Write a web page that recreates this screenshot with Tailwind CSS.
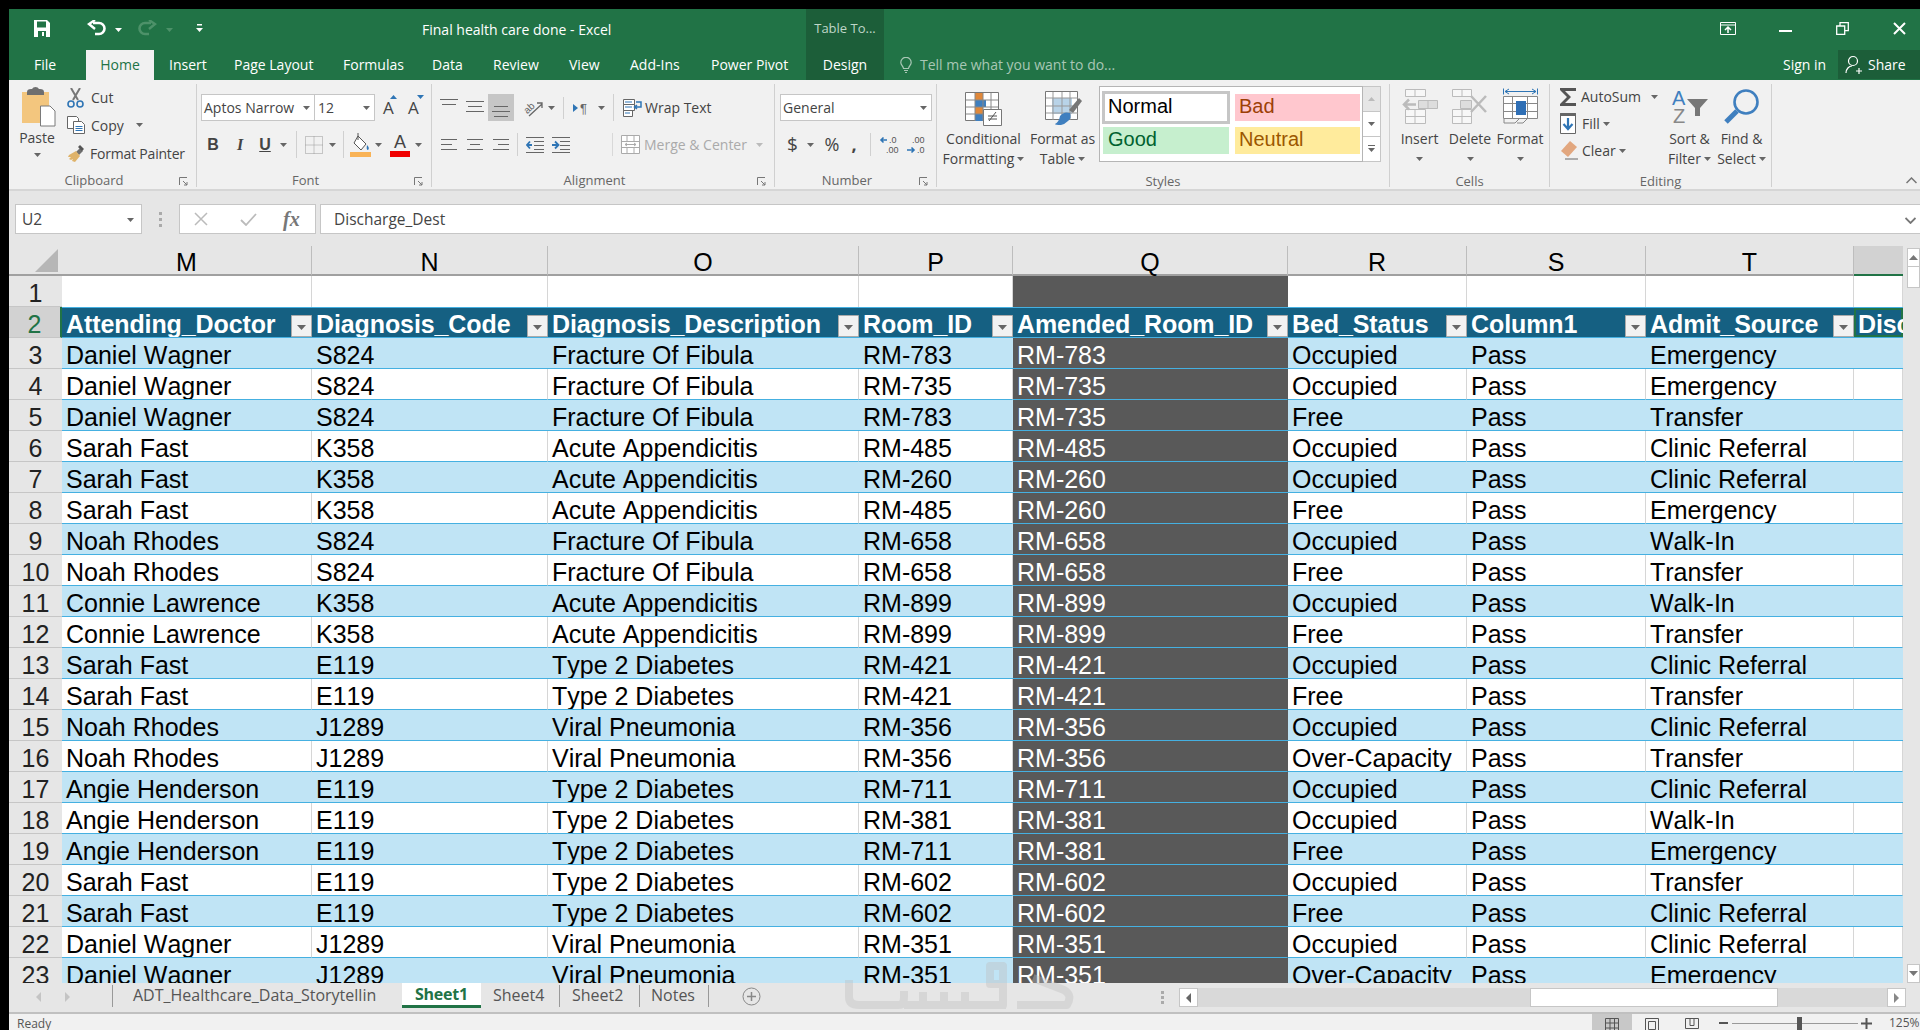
<!DOCTYPE html>
<html><head><meta charset="utf-8"><title>Final health care done - Excel</title>
<script src="https://cdn.jsdelivr.net/npm/@tailwindcss/browser@4"></script></head>
<body class="bg-black w-[1920px] h-[1030px] overflow-hidden font-['Open_Sans',sans-serif]">
<div class="pt-[9px] pl-[9px] w-[1920px] h-[1030px] relative overflow-hidden">

<!-- title row -->
<div class="bg-[#217346] h-[41px] flex text-white text-[14px]">
  <div class="w-[413px] flex items-center">
    <svg class="ml-[25px] mb-[2px]" width="16" height="17" viewBox="0 0 16 17"><path d="M0 0h13l3 3v14H0z" fill="#fff"/><path d="M3 1.500h9v6H3z" fill="#217346"/><path d="M4 11h8v6H4z" fill="#217346"/><path d="M8 12h2v4H8z" fill="#fff"/></svg>
    <svg class="ml-[37px] mb-[2px]" width="19" height="17" viewBox="0 0 19 17" fill="none"><path d="M6 3h6a5 5 0 0 1 0 11H8" stroke="#fff" stroke-width="2.600"/><path d="M8 0 2 4l6 5" stroke="#fff" stroke-width="2.400"/></svg>
    <svg class="ml-[9px]" width="7" height="4"><path d="M0 0h7L3.500 4z" fill="#fff"/></svg>
    <svg class="ml-[16px] mb-[2px]" width="19" height="17" viewBox="0 0 19 17" fill="none"><path d="M13 3H7a5 5 0 0 0 0 11h4" stroke="#4d9169" stroke-width="2.600"/><path d="m11 0 6 4-6 5" stroke="#4d9169" stroke-width="2.400"/></svg>
    <svg class="ml-[9px]" width="7" height="4"><path d="M0 0h7L3.500 4z" fill="#4d9169"/></svg>
    <svg class="ml-[23px] mb-[2px]" width="7" height="9"><path d="M1 0h5v1.500H1zM0 4h7L3.500 8z" fill="#fff"/></svg>
  </div>
  <div class="w-[384px] flex items-center pb-[1px]">Final health care done - Excel</div>
  <div class="w-[78px] bg-[#1c5e39] flex items-center justify-center text-[13px] text-[#bfd6c8] pb-[1px]">Table To...</div>
  <div class="flex-1 flex items-center justify-end pb-[3px]">
    <svg class="mr-[43px]" width="16" height="13" viewBox="0 0 16 13" fill="none" stroke="#fff"><path d="M.5.500h15v12H.5zM.5 3h15"/><path d="M8 11V5M5 8l3-3 3 3" stroke-width="1.500"/></svg>
    <svg class="mr-[44px] mt-[5px]" width="13" height="2"><path d="M0 0h13v2H0z" fill="#fff"/></svg>
    <svg class="mr-[44px]" width="13" height="13" viewBox="0 0 13 13" fill="none" stroke="#fff" stroke-width="1.300"><path d="M.7 4h8v8.300H.7zM4 4V.7h8.300v8H9"/></svg>
    <svg class="mr-[14px]" width="13" height="13" viewBox="0 0 13 13" fill="none" stroke="#fff" stroke-width="2"><path d="m1 1 11 11M12 1 1 12"/></svg>
  </div>
</div>

<!-- tab row -->
<div class="bg-[#217346] h-[30px] flex text-white text-[14px] leading-[29px]">
  <div class="w-[77px] pl-[25px]">File</div>
  <div class="w-[68px] bg-[#f1f1f1] text-[#217346] text-center">Home</div>
  <div class="w-[80px] pl-[15px]">Insert</div>
  <div class="w-[109px]">Page Layout</div>
  <div class="w-[89px]">Formulas</div>
  <div class="w-[61px]">Data</div>
  <div class="w-[76px]">Review</div>
  <div class="w-[61px]">View</div>
  <div class="w-[81px]">Add-Ins</div>
  <div class="w-[95px]">Power Pivot</div>
  <div class="w-[78px] bg-[#1c5e39] text-center">Design</div>
  <svg class="ml-[16px] mt-[7px]" width="12" height="17" viewBox="0 0 12 17" fill="none" stroke="#a8c7b5" stroke-width="1.200"><path d="M3.500 11.500C3 9 .8 8 .8 5.500a5.200 5.200 0 0 1 10.400 0C11.200 8 9 9 8.500 11.500zM4 13.500h4M5 15.500h2"/></svg>
  <div class="ml-[8px] text-[#a8c7b5] w-[863px]">Tell me what you want to do...</div>
  <div class="w-[55px]">Sign in</div>
  <div class="w-[82px] h-[29px] bg-[#1c5e39] flex items-center">
    <svg class="ml-[7px]" width="18" height="20" viewBox="0 0 18 20" fill="none" stroke="#fff" stroke-width="1.200"><circle cx="8" cy="6" r="4.500"/><path d="M1 18c0-4 3-7 6-7M11 16h6M14 13v6"/></svg>
    <span class="ml-[5px]">Share</span>
  </div>
</div>

<!-- ribbon -->
<div class="bg-[#f1f1f1] h-[111px] flex border-b-2 border-[#d6d6d6] text-[14px] text-[#444]">

  <!-- Clipboard -->
  <div class="w-[188px] h-[103px] mt-[4px] border-r border-[#d0d0d0] flex flex-col">
    <div class="h-[91px] flex">
      <div class="w-[58px] flex flex-col items-center">
        <svg class="mt-[3px] -ml-[1px]" width="36" height="40" viewBox="0 0 36 40"><path d="M2 5h27v31H2z" fill="#f3c67e"/><path d="M7 5q0-3 4-3h1q1-2 3.500-2T19 2h1q4 0 4 3v3H7z" fill="#6f6f6f"/><path d="M20.500 19H30l5 5v15H20.500z" fill="#fff" stroke="#7a7a7a"/></svg>
        <div class="-ml-[2px] mt-[2px] leading-[18px]">Paste</div>
        <svg class="-ml-[2px] mt-[6px]" width="7" height="4"><path d="M0 0h7L3.500 4z" fill="#666"/></svg>
      </div>
      <div class="flex flex-col">
        <div class="h-[27px] flex items-center"><svg width="18" height="20" viewBox="0 0 18 20" fill="none"><path d="m4 0 7 12M13 0 6 12" stroke="#777" stroke-width="2"/><circle cx="4" cy="16" r="3" stroke="#2f75b5" stroke-width="1.600"/><circle cx="13" cy="16" r="3" stroke="#2f75b5" stroke-width="1.600"/></svg><span class="ml-[6px]">Cut</span></div>
        <div class="h-[28px] flex items-center"><svg width="18" height="18" viewBox="0 0 18 18" fill="#fff" stroke="#666"><path d="M.5.500h9l2 2v10H.5z"/><path d="M6.500 5.500h8l3 3v9h-11z"/><path d="M8.500 10.500h7M8.500 12.500h7M8.500 14.500h7" stroke="#2f75b5"/></svg><span class="ml-[6px]">Copy</span><svg class="ml-[12px]" width="7" height="4"><path d="M0 0h7L3.500 4z" fill="#666"/></svg></div>
        <div class="h-[28px] flex items-center pt-[1px]"><svg width="18" height="17" viewBox="0 0 18 17"><path d="M9 7l4-4 3 3-4 4z" fill="#6f6f6f"/><path d="M13 0l4 4-2 2-4-4z" fill="#555"/><path d="M9 6l4 5-5 6-3-1 1-2-2 1-2-1 2-2-3 0 1-2z" fill="#dfb36a"/></svg><span class="ml-[5px] tracking-[-0.2px]">Format Painter</span></div>
      </div>
    </div>
    <div class="flex items-center h-[12px] text-[13px] text-[#666]"><span class="flex-1 text-center">Clipboard</span><svg class="mr-[8px]" width="9" height="9" viewBox="0 0 9 9" fill="none" stroke="#777"><path d="M.5 8V.5H8M4 4l4 4M8 5v3H5"/></svg></div>
  </div>

  <!-- Font -->
  <div class="w-[235px] h-[103px] mt-[4px] border-r border-[#d0d0d0] flex flex-col">
    <div class="h-[91px] pl-[4px] flex flex-col">
      <div class="flex items-center mt-[10px] h-[27px]">
        <div class="w-[114px] h-[27px] bg-white border border-[#c6c6c6] flex items-center pl-[2px] justify-between pr-[4px]">Aptos Narrow<svg width="7" height="4"><path d="M0 0h7L3.500 4z" fill="#666"/></svg></div>
        <div class="w-[60px] h-[27px] bg-white border border-[#c6c6c6] border-l-0 flex items-center pl-[3px] justify-between pr-[4px]">12<svg width="7" height="4"><path d="M0 0h7L3.500 4z" fill="#666"/></svg></div>
        <div class="relative ml-[8px] text-[17px] leading-[20px] w-[25px]">A<svg class="absolute left-[7px] top-[-3px]" width="7" height="4"><path d="M3.500 0 7 4H0z" fill="#2f75b5"/></svg></div>
        <div class="relative text-[17px] leading-[20px] w-[14px]">A<svg class="absolute left-[9px] top-[-3px]" width="7" height="4"><path d="M0 0h7L3.500 4z" fill="#2f75b5"/></svg></div>
      </div>
      <div class="flex items-center mt-[10px] h-[27px] font-['Liberation_Sans'] text-[16px]">
        <span class="w-[16px] ml-[4px] font-bold text-center">B</span>
        <span class="w-[16px] ml-[11px] italic font-bold font-['Liberation_Serif'] text-center">I</span>
        <span class="w-[14px] ml-[10px] font-bold underline text-center">U</span>
        <svg class="ml-[8px]" width="7" height="4"><path d="M0 0h7L3.500 4z" fill="#666"/></svg>
        <div class="w-px h-[27px] bg-[#d0d0d0] ml-[9px]"></div>
        <svg class="ml-[8px]" width="18" height="18" viewBox="0 0 18 18" fill="none" stroke="#999" stroke-dasharray="1 1"><path d="M.5.500h17v17H.5zM9 .5v17M.5 9h17"/></svg>
        <svg class="ml-[6px]" width="7" height="4"><path d="M0 0h7L3.500 4z" fill="#666"/></svg>
        <div class="w-px h-[27px] bg-[#d0d0d0] ml-[7px]"></div>
        <svg class="ml-[6px]" width="21" height="24" viewBox="0 0 21 24"><path d="m8 3 8 8-5 6-7-7z" fill="#fff" stroke="#555"/><path d="M8 0v7" stroke="#555"/><path d="M17 12q3 3 1 5-2 0-1-5z" fill="#2f75b5"/><path d="M0 19h21v5H0z" fill="#f9b356"/></svg>
        <svg class="ml-[4px]" width="7" height="4"><path d="M0 0h7L3.500 4z" fill="#666"/></svg>
        <div class="ml-[8px] flex flex-col items-center w-[20px] mt-[2px]"><span class="leading-[17px] text-[#444] text-[18px]">A</span><div class="w-[20px] h-[6px] bg-[#f00000]"></div></div>
        <svg class="ml-[5px]" width="7" height="4"><path d="M0 0h7L3.500 4z" fill="#666"/></svg>
      </div>
    </div>
    <div class="flex items-center h-[12px] text-[13px] text-[#666]"><span class="flex-1 text-center">Font</span><svg class="mr-[8px]" width="9" height="9" viewBox="0 0 9 9" fill="none" stroke="#777"><path d="M.5 8V.5H8M4 4l4 4M8 5v3H5"/></svg></div>
  </div>

  <!-- Alignment -->
  <div class="w-[343px] h-[103px] mt-[4px] border-r border-[#d0d0d0] flex flex-col">
    <div class="h-[91px] flex flex-col">
      <div class="flex items-center mt-[10px] h-[27px]">
        <svg class="ml-[8px] mb-[11px]" width="18" height="7" stroke="#666"><path d="M0 .5h18M2 5.500h14"/></svg>
        <svg class="ml-[8px] mb-[2px]" width="18" height="11" stroke="#666"><path d="M0 .5h18M2 5.500h14M0 10.500h18"/></svg>
        <div class="ml-[4px] w-[26px] h-[27px] bg-[#c6c6c6] flex justify-center items-end pb-[4px]"><svg width="18" height="11" stroke="#666"><path d="M2 .5h14M0 5.500h18M2 10.500h14"/></svg></div>
        <svg class="ml-[11px] overflow-visible" width="20" height="18" viewBox="0 0 20 18" fill="none" stroke="#666"><text x="-1" y="11" font-size="10" fill="#666" stroke="none" transform="rotate(-42 6 9)" font-family="Liberation Sans">ab</text><path d="m4 17 13-12M12 4h5v5" stroke-width="1.300"/></svg>
        <svg class="ml-[3px]" width="7" height="4"><path d="M0 0h7L3.500 4z" fill="#666"/></svg>
        <div class="w-px h-[22px] bg-[#d0d0d0] ml-[8px]"></div>
        <svg class="ml-[9px] overflow-visible" width="18" height="14" viewBox="0 0 18 14"><path d="M0 3l5 4-5 4z" fill="#2f75b5"/><text x="7" y="12" font-size="13" fill="#666" font-family="Liberation Sans">¶</text></svg>
        <svg class="ml-[7px]" width="7" height="4"><path d="M0 0h7L3.500 4z" fill="#666"/></svg>
        <div class="w-px h-[27px] bg-[#d0d0d0] ml-[8px]"></div>
        <svg class="ml-[9px]" width="20" height="18" viewBox="0 0 20 18" fill="#fff" stroke="#666"><path d="M.5.500h11v5H.5zM.5 5.500h11v6H.5zM.5 11.500h9v6h-9z"/><path d="M13 3h5v5h-6M14 6 11.500 8l2.500 2" fill="none" stroke="#2f75b5" stroke-width="1.500"/><path d="M2 3h7M2 8h7M2 14h5" stroke="#2f75b5"/></svg>
        <span class="ml-[2px]">Wrap Text</span>
      </div>
      <div class="flex items-center mt-[10px] h-[27px]">
        <svg class="ml-[9px]" width="16" height="11" stroke="#666"><path d="M0 .5h16M0 5.500h11M0 10.500h16"/></svg>
        <svg class="ml-[10px]" width="16" height="11" stroke="#666"><path d="M0 .5h16M3 5.500h10M0 10.500h16"/></svg>
        <svg class="ml-[10px]" width="16" height="11" stroke="#666"><path d="M0 .5h16M5 5.500h11M0 10.500h16"/></svg>
        <div class="w-px h-[23px] bg-[#d0d0d0] ml-[8px]"></div>
        <svg class="ml-[8px]" width="18" height="16" viewBox="0 0 18 16" fill="none"><path d="M0 .5h18M8 4.500h10M8 8.500h10M8 12.500h10M0 15.500h18" stroke="#666"/><path d="M6 8H1M4 4.500 1 8l3 3.500" stroke="#2f75b5" stroke-width="1.800"/></svg>
        <svg class="ml-[8px]" width="18" height="16" viewBox="0 0 18 16" fill="none"><path d="M0 .5h18M8 4.500h10M8 8.500h10M8 12.500h10M0 15.500h18" stroke="#666"/><path d="M0 8h6M3 4.500 6.500 8 3 11.500" stroke="#2f75b5" stroke-width="1.800"/></svg>
        <div class="w-px h-[23px] bg-[#d8d8d8] ml-[42px]"></div>
        <svg class="ml-[8px]" width="19" height="19" viewBox="0 0 19 19" fill="#fff" stroke="#aaa"><path d="M.5.500h18v18H.5zM.5 6.500h18M.5 12.500h18M6 .5v6M13 .5v6M6 12.500v6M13 12.500v6"/><path d="M4 9.500h11M6 8 4 9.500 6 11M13 8l2 1.500-2 1.500" fill="none"/></svg>
        <span class="ml-[4px] text-[#aaa]">Merge &amp; Center</span>
        <svg class="ml-[9px]" width="7" height="4"><path d="M0 0h7L3.500 4z" fill="#bbb"/></svg>
      </div>
    </div>
    <div class="flex items-center h-[12px] text-[13px] text-[#666]"><span class="flex-1 text-center">Alignment</span><svg class="mr-[8px]" width="9" height="9" viewBox="0 0 9 9" fill="none" stroke="#777"><path d="M.5 8V.5H8M4 4l4 4M8 5v3H5"/></svg></div>
  </div>

  <!-- Number -->
  <div class="w-[162px] h-[103px] mt-[4px] border-r border-[#d0d0d0] flex flex-col">
    <div class="h-[91px] flex flex-col">
      <div class="flex items-center mt-[10px] h-[27px] pl-[5px]">
        <div class="w-[152px] h-[27px] bg-white border border-[#c6c6c6] flex items-center pl-[2px] justify-between pr-[4px]">General<svg width="7" height="4"><path d="M0 0h7L3.500 4z" fill="#666"/></svg></div>
      </div>
      <div class="flex items-center mt-[10px] h-[27px]">
        <span class="ml-[12px] w-[10px] text-[19px] text-center">$</span>
        <svg class="ml-[10px]" width="7" height="4"><path d="M0 0h7L3.500 4z" fill="#666"/></svg>
        <span class="ml-[8px] w-[20px] text-[18px] text-center">%</span>
        <span class="ml-[7px] w-[10px] text-[18px] font-bold text-center">,</span>
        <div class="w-px h-[23px] bg-[#d0d0d0] ml-[11px]"></div>
        <svg class="ml-[9px] overflow-visible" width="20" height="20" viewBox="0 0 20 20" font-family="Liberation Sans" font-size="9" fill="#555"><text x="9" y="8">.0</text><text x="6" y="18">.00</text><path d="M1 5h6M3.500 2.500 1 5l2.500 2.500" fill="none" stroke="#2f75b5" stroke-width="1.600"/></svg>
        <svg class="ml-[6px] overflow-visible" width="20" height="20" viewBox="0 0 20 20" font-family="Liberation Sans" font-size="9" fill="#555"><text x="6" y="8">.00</text><text x="11" y="18">.0</text><path d="M1 15h7M5.500 12.500 8 15l-2.500 2.500" fill="none" stroke="#2f75b5" stroke-width="1.600"/></svg>
      </div>
    </div>
    <div class="flex items-center h-[12px] text-[13px] text-[#666]"><span class="flex-1 text-center">Number</span><svg class="mr-[8px]" width="9" height="9" viewBox="0 0 9 9" fill="none" stroke="#777"><path d="M.5 8V.5H8M4 4l4 4M8 5v3H5"/></svg></div>
  </div>

  <!-- Styles -->
  <div class="w-[453px] h-[103px] mt-[4px] border-r border-[#d0d0d0] flex flex-col">
    <div class="h-[91px] flex">
      <div class="w-[83px] ml-[5px] flex flex-col items-center">
        <svg class="mt-[8px] mb-[3px]" width="37" height="34" viewBox="0 0 37 34"><path d="M.5.500h33v28H.5z" fill="#fff" stroke="#777"/><path d="M10 1h8v7h-8zM10 15h8v7h-8z" fill="#e0883a"/><path d="M10 8h11v7H10zM10 22h8v7h-8z" fill="#3f7fbf"/><path d="M10 1v28M18 1v28M26 1v20M1 8h32M1 15h32M1 22h18" stroke="#888" fill="none"/><path d="M18.500 17.500h18v16h-18z" fill="#fff" stroke="#777"/><path d="m24 29 7-9M23 24h9M23 27h9" stroke="#555"/></svg>
        <div class="leading-[20px] whitespace-nowrap">Conditional</div>
        <div class="leading-[20px] flex items-center whitespace-nowrap">Formatting<svg class="ml-[3px]" width="7" height="4"><path d="M0 0h7L3.500 4z" fill="#666"/></svg></div>
      </div>
      <div class="w-[75px] flex flex-col items-center">
        <svg class="mt-[7px] mb-[3px] ml-[2px]" width="38" height="35" viewBox="0 0 38 35"><path d="M.5.500h32v28H.5z" fill="#fff" stroke="#777"/><path d="M7 7h20v16H7z" fill="#b8d3e8"/><path d="M8 1v28M17 1v28M25 1v28M1 7h32M1 15h32M1 22h32" stroke="#999" fill="none"/><path d="m24 19 10-12 3 3-9 12z" fill="#777"/><path d="M16 34q-6 0-6-1 4-2 5-8 4-5 10-3 2 5-2 8-3 3-7 4z" fill="#3f7fbf"/></svg>
        <div class="leading-[20px] whitespace-nowrap">Format as</div>
        <div class="leading-[20px] flex items-center">Table<svg class="ml-[3px]" width="7" height="4"><path d="M0 0h7L3.500 4z" fill="#666"/></svg></div>
      </div>
      <div class="ml-[-1px] mt-[2px] w-[264px] h-[76px] bg-white border border-[#b5b5b5] grid grid-cols-[128px_126px] gap-x-[3px] gap-y-[3px] content-start pl-[2px] pt-[4px] text-[20px] font-['Liberation_Sans'] leading-[24px]">
        <div class="h-[33px] -mb-[3px] border-[3px] border-[#c6c6c6] pl-[3px] text-black">Normal</div>
        <div class="h-[27px] mt-[3px] ml-[2px] w-[125px] bg-[#ffc7ce] text-[#9c3f06] pl-[4px]">Bad</div>
        <div class="h-[27px] mt-[3px] ml-[1px] w-[126px] bg-[#c6efce] text-[#00612e] pl-[5px]">Good</div>
        <div class="h-[27px] mt-[3px] ml-[2px] w-[125px] bg-[#ffeb9c] text-[#9c5700] pl-[4px]">Neutral</div>
      </div>
      <div class="mt-[2px] w-[18px] h-[76px] flex flex-col">
        <div class="h-[26px] bg-[#e6e6e6] border border-l-0 border-[#c6c6c6] flex items-center justify-center"><svg width="7" height="4"><path d="M3.500 0 7 4H0z" fill="#bbb"/></svg></div>
        <div class="h-[24px] bg-white border-r border-[#c6c6c6] flex items-center justify-center"><svg width="7" height="4"><path d="M0 0h7L3.500 4z" fill="#666"/></svg></div>
        <div class="h-[26px] bg-white border border-l-0 border-[#c6c6c6] flex items-center justify-center"><svg width="7" height="8"><path d="M0 0h7v1H0zM0 3h7L3.500 7z" fill="#666"/></svg></div>
      </div>
    </div>
    <div class="h-[12px] text-[13px] text-[#666] text-center leading-[12px]">Styles</div>
  </div>

  <!-- Cells -->
  <div class="w-[160px] h-[103px] mt-[4px] border-r border-[#d0d0d0] flex flex-col">
    <div class="h-[91px] flex pl-[4px]">
      <div class="w-[51px] flex flex-col items-center">
        <svg class="mt-[5px] mb-[5px]" width="36" height="35" viewBox="0 0 36 35" fill="#f7f7f7" stroke="#bbb"><path d="M3.500.500h20v7h-20zM13 .5v7M3.500 20.500h20v14h-20zM13 20.500v14M3.500 27.500h20"/><path d="M16.500 11.500h19v8h-19zM26 11.500v8" fill="#ddd"/><path d="M14 15.500H2M7 10.500l-5 5 5 5" fill="none" stroke-width="2.500"/></svg>
        <div class="leading-[20px]">Insert</div>
        <svg class="mt-[8px]" width="7" height="4"><path d="M0 0h7L3.500 4z" fill="#666"/></svg>
      </div>
      <div class="w-[50px] flex flex-col items-center">
        <svg class="mt-[5px] mb-[5px]" width="36" height="35" viewBox="0 0 36 35" fill="#f7f7f7" stroke="#bbb"><path d="M.5.500h19v7H.5zM10 .5v7M.5 20.500h19v14H.5zM10 20.500v14M.5 27.500h19"/><path d="M8.500 11.500h11v8h-11z" fill="#ddd"/><path d="m19 7 15 16M34 7 19 23" fill="none" stroke-width="2.500"/></svg>
        <div class="leading-[20px]">Delete</div>
        <svg class="mt-[8px]" width="7" height="4"><path d="M0 0h7L3.500 4z" fill="#666"/></svg>
      </div>
      <div class="w-[50px] flex flex-col items-center">
        <svg class="mt-[4px] mb-[5px]" width="35" height="36" viewBox="0 0 35 36" fill="none"><path d="M.5.500v6M34.500.500v6M2 3.500h31M6 1 2 3.500 6 6M29 1l4 2.500L29 6" stroke="#2f75b5"/><path d="M.5 8.500h34v22H.5z" fill="#fff" stroke="#888"/><path d="M9.500 8.500v22M24.500 8.500v22M.5 15.500h34M.5 23.500h34" stroke="#888"/><path d="M13 13h10v14H13z" fill="#2f6fb5"/><path d="M1 31v4h11l4-4M14 35h6l4-4" stroke="#888"/></svg>
        <div class="leading-[20px]">Format</div>
        <svg class="mt-[8px]" width="7" height="4"><path d="M0 0h7L3.500 4z" fill="#666"/></svg>
      </div>
    </div>
    <div class="h-[12px] text-[13px] text-[#666] text-center leading-[12px]">Cells</div>
  </div>

  <!-- Editing -->
  <div class="w-[222px] h-[103px] mt-[4px] border-r border-[#d0d0d0] flex flex-col">
    <div class="h-[91px] flex">
      <div class="w-[112px] pl-[10px] flex flex-col -mt-[1px]">
        <div class="h-[27px] flex items-center"><svg width="17" height="18" viewBox="0 0 17 18"><path d="M0 0h16v3H5l6 6-6 6h11v3H0v-2l7-7-7-7z" fill="#555"/></svg><span class="ml-[4px]">AutoSum</span><svg class="ml-[10px]" width="7" height="4"><path d="M0 0h7L3.500 4z" fill="#666"/></svg></div>
        <div class="h-[27px] flex items-center"><svg width="16" height="21" viewBox="0 0 16 21" fill="#fff" stroke="#666"><path d="M.5.500h15v20H.5z"/><path d="M.5.500h15v2H.5z" fill="#666"/><path d="M8 5v11M3.500 11 8 16l4.500-5" fill="none" stroke="#2f75b5" stroke-width="2.200"/></svg><span class="ml-[6px]">Fill</span><svg class="ml-[3px]" width="7" height="4"><path d="M0 0h7L3.500 4z" fill="#666"/></svg></div>
        <div class="h-[27px] flex items-center"><svg width="18" height="20" viewBox="0 0 18 20"><path d="M10 0l7 6-9 10-7-6z" fill="#e2a77f"/><path d="M5 18h13" stroke="#666"/></svg><span class="ml-[4px]">Clear</span><svg class="ml-[3px]" width="7" height="4"><path d="M0 0h7L3.500 4z" fill="#666"/></svg></div>
      </div>
      <div class="w-[55px] flex flex-col items-center">
        <svg class="mt-[6px] mb-[5px] overflow-visible" width="36" height="34" viewBox="0 0 36 34" font-family="Liberation Sans" font-size="20"><text x="0" y="15" fill="#3f7fbf">A</text><text x="1" y="33" fill="#888">Z</text><path d="M15 9h21l-8 9v8h-5v-8z" fill="#777"/></svg>
        <div class="leading-[20px]">Sort &amp;</div>
        <div class="leading-[20px] flex items-center">Filter<svg class="ml-[3px]" width="7" height="4"><path d="M0 0h7L3.500 4z" fill="#666"/></svg></div>
      </div>
      <div class="w-[49px] flex flex-col items-center">
        <svg class="mt-[5px] mb-[5px]" width="36" height="35" viewBox="0 0 36 35" fill="none"><circle cx="22" cy="13" r="11.500" stroke="#3f7fbf" stroke-width="2.600"/><path d="m13 22-11 11" stroke="#3f7fbf" stroke-width="5"/></svg>
        <div class="leading-[20px]">Find &amp;</div>
        <div class="leading-[20px] flex items-center">Select<svg class="ml-[3px]" width="7" height="4"><path d="M0 0h7L3.500 4z" fill="#666"/></svg></div>
      </div>
    </div>
    <div class="h-[12px] text-[13px] text-[#666] text-center leading-[12px]">Editing</div>
  </div>
  <div class="flex-1 flex justify-end items-end pb-[5px] pr-[3px]"><svg width="11" height="7" viewBox="0 0 11 7" fill="none" stroke="#777" stroke-width="1.500"><path d="m.5 6 5-5 5 5"/></svg></div>
</div>

<!-- formula bar -->
<div class="bg-[#e6e6e6] h-[55px] flex pt-[13px] text-[15.500px] text-[#444]">
  <div class="ml-[6px] w-[127px] h-[30px] bg-white border border-[#c6c6c6] flex items-center justify-between pl-[6px] pr-[7px] pt-[2px]">U2<svg width="7" height="4"><path d="M0 0h7L3.500 4z" fill="#666"/></svg></div>
  <div class="w-[37px] flex justify-center items-center h-[30px]"><svg width="3" height="15"><path d="M0 0h3v3H0zM0 6h3v3H0zM0 12h3v3H0z" fill="#aaa"/></svg></div>
  <div class="w-[137px] h-[30px] bg-white border border-[#c6c6c6] flex items-center">
    <svg class="ml-[14px]" width="14" height="14" viewBox="0 0 14 14" fill="none" stroke="#bbb" stroke-width="1.500"><path d="m1 1 12 12M13 1 1 13"/></svg>
    <svg class="ml-[32px]" width="17" height="13" viewBox="0 0 17 13" fill="none" stroke="#bbb" stroke-width="1.800"><path d="m1 7 5 5L16 1"/></svg>
    <span class="ml-[26px] italic font-bold font-['Liberation_Serif'] text-[20px] text-[#777]">fx</span>
  </div>
  <div class="ml-[4px] flex-1 h-[30px] bg-white border border-r-0 border-[#c6c6c6] flex items-center justify-between pl-[13px] pr-[4px] pt-[2px]">Discharge_Dest<svg width="11" height="7" viewBox="0 0 11 7" fill="none" stroke="#777" stroke-width="1.800"><path d="m.5 1 5 5 5-5"/></svg></div>
</div>

<!-- grid + scrollbar -->
<div class="h-[737px] flex bg-[#e6e6e6] overflow-hidden">
<table class="table-fixed border-separate border-spacing-0 w-[1894px] h-min font-['Liberation_Sans'] text-[25px] leading-[26px] [font-kerning:none] text-black
 [&_th]:font-normal [&_th]:align-bottom [&_td]:align-bottom [&_td]:whitespace-nowrap [&_td]:overflow-hidden [&_td]:pl-[4px] [&_td]:pb-0
 [&_tbody_th]:bg-[#e6e6e6] [&_tbody_th]:border-b [&_tbody_th]:border-[#c6c6c6] [&_tbody_th]:text-[#222] [&_tbody_th]:leading-[25px]
 [&_tbody_tr]:h-[31px] [&_tbody_td]:border-b [&_tbody_td]:border-[#45b0e1]
 [&_tbody_tr:nth-child(odd)>td]:bg-[#c0e4f5] [&_tbody_tr:nth-child(even)>td]:bg-white [&_tbody_tr:nth-child(even)>td]:border-r [&_tbody_tr:nth-child(even)>td]:border-r-[#d6d6d6]
 [&_tbody_td:nth-child(6)]:bg-[#595959]! [&_tbody_td:nth-child(6)]:text-white [&_tbody_td:nth-child(6)]:border-r-[#595959]!">
<colgroup><col class="w-[53px]"><col class="w-[250px]"><col class="w-[236px]"><col class="w-[311px]"><col class="w-[154px]"><col class="w-[275px]"><col class="w-[179px]"><col class="w-[179px]"><col class="w-[208px]"><col class="w-[49px]"></colgroup>
<thead>
<tr class="h-[30px] [&>th]:leading-[24px] [&>th]:border-b-2 [&>th]:border-b-[#a0a0a0] [&>th]:border-r [&>th]:border-r-[#bdbdbd] [&>th]:bg-[#e6e6e6]">
  <th class="relative border-r-0!"><svg class="absolute right-[4px] bottom-[2px]" width="23" height="23"><path d="M23 0v23H0z" fill="#b6b6b6"/></svg></th>
  <th>M</th><th>N</th><th>O</th><th>P</th><th>Q</th><th>R</th><th>S</th><th>T</th><th class="bg-[#d2d2d2]! border-b-[#217346]! border-r-0!"></th>
</tr>
<tr class="h-[31px] [&>td]:bg-white [&>td]:border-r [&>td]:border-r-[#d6d6d6]">
  <th class="bg-[#e6e6e6] border-b border-[#c6c6c6] text-[#222] leading-[25px]">1</th>
  <td></td><td></td><td></td><td></td><td class="bg-[#595959]! border-r-[#595959]!"></td><td></td><td></td><td></td><td></td>
</tr>
<tr class="h-[31px] [&>td]:bg-[#156082] [&>td]:text-white [&>td]:font-bold [&>td]:tracking-[-0.1px] [&>td]:border-t [&>td]:border-b [&>td]:border-[#45b0e1] [&>td]:relative [&_svg]:absolute [&_svg]:right-0 [&_svg]:bottom-0">
  <th class="bg-[#d2d2d2] border-b border-[#c6c6c6] border-r-2 border-r-[#217346] text-[#217346] leading-[25px]">2</th>
  <td>Attending_Doctor<svg width="21" height="22" viewBox="0 0 21 22"><path d="M.5.500h20v21H.5z" fill="#f2f2f2" stroke="#aaa"/><path d="M6 10h9l-4.500 5z" fill="#666"/></svg></td>
  <td>Diagnosis_Code<svg width="21" height="22" viewBox="0 0 21 22"><path d="M.5.500h20v21H.5z" fill="#f2f2f2" stroke="#aaa"/><path d="M6 10h9l-4.500 5z" fill="#666"/></svg></td>
  <td>Diagnosis_Description<svg width="21" height="22" viewBox="0 0 21 22"><path d="M.5.500h20v21H.5z" fill="#f2f2f2" stroke="#aaa"/><path d="M6 10h9l-4.500 5z" fill="#666"/></svg></td>
  <td>Room_ID<svg width="21" height="22" viewBox="0 0 21 22"><path d="M.5.500h20v21H.5z" fill="#f2f2f2" stroke="#aaa"/><path d="M6 10h9l-4.500 5z" fill="#666"/></svg></td>
  <td>Amended_Room_ID<svg width="21" height="22" viewBox="0 0 21 22"><path d="M.5.500h20v21H.5z" fill="#f2f2f2" stroke="#aaa"/><path d="M6 10h9l-4.500 5z" fill="#666"/></svg></td>
  <td>Bed_Status<svg width="21" height="22" viewBox="0 0 21 22"><path d="M.5.500h20v21H.5z" fill="#f2f2f2" stroke="#aaa"/><path d="M6 10h9l-4.500 5z" fill="#666"/></svg></td>
  <td>Column1<svg width="21" height="22" viewBox="0 0 21 22"><path d="M.5.500h20v21H.5z" fill="#f2f2f2" stroke="#aaa"/><path d="M6 10h9l-4.500 5z" fill="#666"/></svg></td>
  <td>Admit_Source<svg width="21" height="22" viewBox="0 0 21 22"><path d="M.5.500h20v21H.5z" fill="#f2f2f2" stroke="#aaa"/><path d="M6 10h9l-4.500 5z" fill="#666"/></svg></td>
  <td class="shadow-[inset_0_0_0_2px_#217346]">Disc</td>
</tr>
</thead>
<tbody>
<tr><th>3</th><td>Daniel Wagner</td><td>S824</td><td>Fracture Of Fibula</td><td>RM-783</td><td>RM-783</td><td>Occupied</td><td>Pass</td><td>Emergency</td><td></td></tr>
<tr><th>4</th><td>Daniel Wagner</td><td>S824</td><td>Fracture Of Fibula</td><td>RM-735</td><td>RM-735</td><td>Occupied</td><td>Pass</td><td>Emergency</td><td></td></tr>
<tr><th>5</th><td>Daniel Wagner</td><td>S824</td><td>Fracture Of Fibula</td><td>RM-783</td><td>RM-735</td><td>Free</td><td>Pass</td><td>Transfer</td><td></td></tr>
<tr><th>6</th><td>Sarah Fast</td><td>K358</td><td>Acute Appendicitis</td><td>RM-485</td><td>RM-485</td><td>Occupied</td><td>Pass</td><td>Clinic Referral</td><td></td></tr>
<tr><th>7</th><td>Sarah Fast</td><td>K358</td><td>Acute Appendicitis</td><td>RM-260</td><td>RM-260</td><td>Occupied</td><td>Pass</td><td>Clinic Referral</td><td></td></tr>
<tr><th>8</th><td>Sarah Fast</td><td>K358</td><td>Acute Appendicitis</td><td>RM-485</td><td>RM-260</td><td>Free</td><td>Pass</td><td>Emergency</td><td></td></tr>
<tr><th>9</th><td>Noah Rhodes</td><td>S824</td><td>Fracture Of Fibula</td><td>RM-658</td><td>RM-658</td><td>Occupied</td><td>Pass</td><td>Walk-In</td><td></td></tr>
<tr><th>10</th><td>Noah Rhodes</td><td>S824</td><td>Fracture Of Fibula</td><td>RM-658</td><td>RM-658</td><td>Free</td><td>Pass</td><td>Transfer</td><td></td></tr>
<tr><th>11</th><td>Connie Lawrence</td><td>K358</td><td>Acute Appendicitis</td><td>RM-899</td><td>RM-899</td><td>Occupied</td><td>Pass</td><td>Walk-In</td><td></td></tr>
<tr><th>12</th><td>Connie Lawrence</td><td>K358</td><td>Acute Appendicitis</td><td>RM-899</td><td>RM-899</td><td>Free</td><td>Pass</td><td>Transfer</td><td></td></tr>
<tr><th>13</th><td>Sarah Fast</td><td>E119</td><td>Type 2 Diabetes</td><td>RM-421</td><td>RM-421</td><td>Occupied</td><td>Pass</td><td>Clinic Referral</td><td></td></tr>
<tr><th>14</th><td>Sarah Fast</td><td>E119</td><td>Type 2 Diabetes</td><td>RM-421</td><td>RM-421</td><td>Free</td><td>Pass</td><td>Transfer</td><td></td></tr>
<tr><th>15</th><td>Noah Rhodes</td><td>J1289</td><td>Viral Pneumonia</td><td>RM-356</td><td>RM-356</td><td>Occupied</td><td>Pass</td><td>Clinic Referral</td><td></td></tr>
<tr><th>16</th><td>Noah Rhodes</td><td>J1289</td><td>Viral Pneumonia</td><td>RM-356</td><td>RM-356</td><td>Over-Capacity</td><td>Pass</td><td>Transfer</td><td></td></tr>
<tr><th>17</th><td>Angie Henderson</td><td>E119</td><td>Type 2 Diabetes</td><td>RM-711</td><td>RM-711</td><td>Occupied</td><td>Pass</td><td>Clinic Referral</td><td></td></tr>
<tr><th>18</th><td>Angie Henderson</td><td>E119</td><td>Type 2 Diabetes</td><td>RM-381</td><td>RM-381</td><td>Occupied</td><td>Pass</td><td>Walk-In</td><td></td></tr>
<tr><th>19</th><td>Angie Henderson</td><td>E119</td><td>Type 2 Diabetes</td><td>RM-711</td><td>RM-381</td><td>Free</td><td>Pass</td><td>Emergency</td><td></td></tr>
<tr><th>20</th><td>Sarah Fast</td><td>E119</td><td>Type 2 Diabetes</td><td>RM-602</td><td>RM-602</td><td>Occupied</td><td>Pass</td><td>Transfer</td><td></td></tr>
<tr><th>21</th><td>Sarah Fast</td><td>E119</td><td>Type 2 Diabetes</td><td>RM-602</td><td>RM-602</td><td>Free</td><td>Pass</td><td>Clinic Referral</td><td></td></tr>
<tr><th>22</th><td>Daniel Wagner</td><td>J1289</td><td>Viral Pneumonia</td><td>RM-351</td><td>RM-351</td><td>Occupied</td><td>Pass</td><td>Clinic Referral</td><td></td></tr>
<tr><th>23</th><td>Daniel Wagner</td><td>J1289</td><td>Viral Pneumonia</td><td>RM-351</td><td>RM-351</td><td>Over-Capacity</td><td>Pass</td><td>Emergency</td><td></td></tr>
</tbody></table>
<div class="ml-[4px] w-[13px] h-[737px] flex flex-col pt-[2px]">
  <div class="h-[19px] bg-white border border-[#c6c6c6] flex items-center justify-center"><svg width="9" height="5"><path d="M4.500 0 9 5H0z" fill="#777"/></svg></div>
  <div class="h-[21px] bg-white border-x border-b border-[#c6c6c6]"></div>
  <div class="flex-1"></div>
  <div class="h-[19px] bg-white border border-[#c6c6c6] flex items-center justify-center"><svg width="9" height="5"><path d="M0 0h9L4.500 5z" fill="#777"/></svg></div>
</div>
</div>

<!-- sheet tabs -->
<div class="h-[29px] bg-[#e6e6e6] flex text-[16px] text-[#555] leading-[24px]">
  <svg class="ml-[27px] mt-[9px]" width="5" height="10"><path d="M5 0v10L0 5z" fill="#c4c4c4"/></svg>
  <svg class="ml-[24px] mt-[9px]" width="5" height="10"><path d="M0 0v10l5-5z" fill="#c4c4c4"/></svg>
  <div class="ml-[42px] mt-[2px] w-px h-[22px] bg-[#999]"></div>
  <div class="w-[289px] pl-[20px] whitespace-nowrap">ADT_Healthcare_Data_Storytellin</div>
  <div class="w-[79px] h-[25px] bg-white border-b-[3px] border-[#217346] text-[#217346] font-bold text-center leading-[23px] tracking-[-0.2px]">Sheet1</div>
  <div class="w-[78px] pl-[12px]">Sheet4</div>
  <div class="mt-[2px] w-px h-[22px] bg-[#999]"></div>
  <div class="w-[79px] pl-[12px]">Sheet2</div>
  <div class="mt-[2px] w-px h-[22px] bg-[#999]"></div>
  <div class="w-[68px] pl-[11px]">Notes</div>
  <div class="mt-[2px] w-px h-[22px] bg-[#999]"></div>
  <svg class="ml-[33px] mt-[4px]" width="19" height="19" viewBox="0 0 19 19" fill="none" stroke="#888"><circle cx="9.500" cy="9.500" r="8.500"/><path d="M9.500 5v9M5 9.500h9" stroke-width="1.500"/></svg>
  <svg class="ml-[400px] mt-[8px]" width="3" height="13"><path d="M0 0h3v3H0zM0 5h3v3H0zM0 10h3v3H0z" fill="#aaa"/></svg>
  <div class="ml-[15px] mt-[5px] w-[727px] h-[19px] bg-[#d9d9d9] flex justify-between">
    <div class="w-[19px] h-[19px] bg-white border border-[#c6c6c6] flex items-center justify-center"><svg width="5" height="10"><path d="M5 0v10L0 5z" fill="#666"/></svg></div>
    <div class="w-[248px] h-[19px] bg-white border border-[#c6c6c6] ml-[332px]"></div>
    <div class="w-[19px] h-[19px] bg-white border border-[#c6c6c6] ml-[109px] flex items-center justify-center"><svg width="5" height="10"><path d="M0 0v10l5-5z" fill="#888"/></svg></div>
  </div>
</div>

<!-- status bar -->
<div class="h-[18px] bg-[#f1f1f1] border-t-2 border-[#c0c0c0] flex items-start text-[12px] text-[#555] overflow-hidden">
  <span class="ml-[8px] mt-[2px] leading-[16px]">Ready</span>
  <div class="ml-auto flex items-start h-[16px]">
    <div class="w-[40px] h-[16px] bg-[#c8c8c8] flex justify-center pt-[4px]"><svg class="shrink-0" width="14" height="15" viewBox="0 0 14 15" fill="none" stroke="#555"><path d="M.5.500h13v14H.5zM5 .5v14M9.500.5v14M.5 5h13M.5 10h13"/></svg></div>
    <svg class="ml-[13px] mt-[4px]" width="14" height="15" viewBox="0 0 14 15" fill="none" stroke="#555"><path d="M.5.500h13v14H.5zM3.500 3.500h7v8h-7z"/></svg>
    <svg class="ml-[26px] mt-[4px]" width="14" height="15" viewBox="0 0 14 15" fill="none" stroke="#555"><path d="M.5.500h13v10H.5zM5 .5v7h4v-7"/></svg>
    <svg class="ml-[20px] mt-[8px]" width="9" height="2"><path d="M0 0h9v2H0z" fill="#555"/></svg>
    <div class="ml-[4px] mt-[9px] w-[126px] h-px bg-[#999] relative"><div class="absolute left-[65px] -top-[6px] w-[5px] h-[13px] bg-[#555]"></div></div>
    <svg class="ml-[3px] mt-[4px]" width="11" height="11"><path d="M0 4.500h11v2H0zM4.500 0h2v11h-2z" fill="#555"/></svg>
    <span class="ml-[17px] mt-[1px] w-[31px] whitespace-nowrap leading-[16px]">125%</span>
  </div>
</div>

<!-- watermark -->
<svg class="absolute left-[820px] top-[950px] pointer-events-none" width="280" height="70" viewBox="0 0 280 70" fill="none" stroke="#bdbdbd" stroke-opacity="0.38" stroke-width="8" stroke-linejoin="round"><path d="M29 30v17q0 8 10 8h40q5 0 5-8v-6M84 55h102M103 42v13M124 42v13M145 42v13M168 55h15V16h-13v18h13M197 55h50q6-10-3-15l-31-12"/></svg>
</div>
</body></html>
